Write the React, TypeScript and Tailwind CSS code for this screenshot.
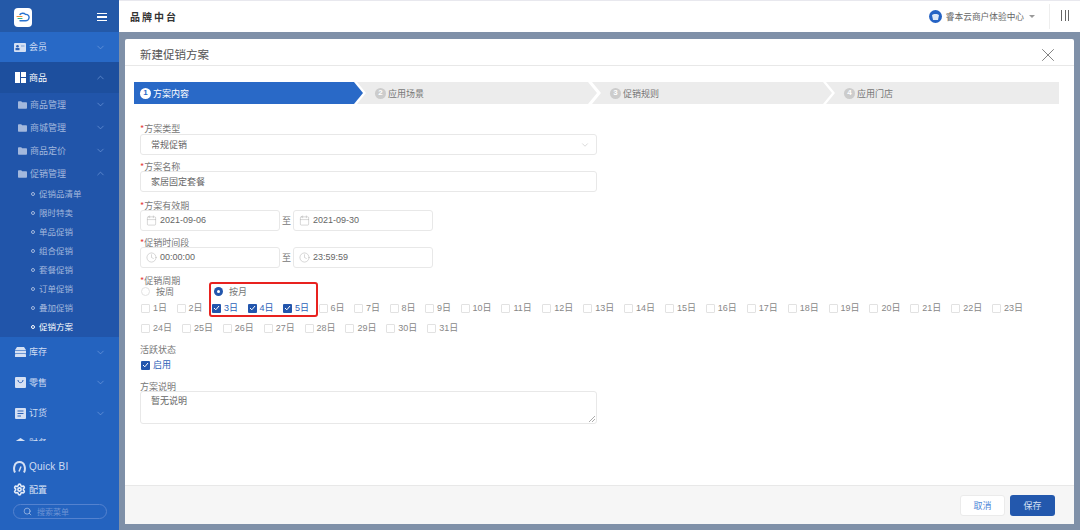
import { ChevronDown, ChevronUp, Settings, Search, X, Calendar, Clock } from 'lucide-react';
import type { ReactNode } from 'react';

const LEAF_ITEMS = ['促销品清单', '限时特卖', '单品促销', '组合促销', '套餐促销', '订单促销', '叠加促销', '促销方案'];
const SUB_ITEMS = ['商品管理', '商城管理', '商品定价'];
const ROW_ONE = Array.from({ length: 23 }, (_, i) => i + 1);
const ROW_TWO = Array.from({ length: 8 }, (_, i) => i + 24);

function Chevron({ up }: { up?: boolean }) {
  const Icon = up ? ChevronUp : ChevronDown;
  return <Icon size={11} strokeWidth={1.3} className="absolute right-[13px] text-[#7da3e0]" />;
}

function Latin({ children }: { children: ReactNode }) {
  return <span className="[font-family:'Liberation_Sans',sans-serif]">{children}</span>;
}

function FolderIcon() {
  return (
    <svg width="9" height="8" viewBox="0 0 9 8" className="shrink-0">
      <path d="M0 1.2C0 .6.4.2 1 .2h2.2l1 1.1H8c.6 0 1 .4 1 1v4.5c0 .6-.4 1-1 1H1c-.6 0-1-.4-1-1z" fill="#a3b8dd" />
    </svg>
  );
}

function MenuRow({ icon, label, up, className }: { icon: ReactNode; label: string; up?: boolean; className: string }) {
  return (
    <div className={`relative flex items-center pl-[14px] gap-[3px] text-[9px] text-[#cfdcf2] ${className}`}>
      <span className="flex w-[12px] justify-center">{icon}</span>
      <span>{label}</span>
      <Chevron up={up} />
    </div>
  );
}

function Sidebar() {
  return (
    <aside className="flex h-full w-[119px] shrink-0 flex-col bg-[#2463bf]">
      <div className="flex h-[32px] items-center justify-between bg-[#2459a8] pl-[14px] pr-[12px] pt-[2px]">
        <div className="flex h-[19px] w-[18px] items-center justify-center rounded-[4px] bg-white">
          <svg width="14" height="11" viewBox="0 0 14 11" fill="none">
            <path d="M4 2.5C5 1 8 .7 9.5 2.4 12 2.2 13.4 4 13 6c-.3 1.8-1.8 2.8-3.500 2.800H4" stroke="#2a73d0" strokeWidth="1.400" strokeLinecap="round" />
            <path d="M1 4.500h5" stroke="#e98c35" strokeWidth="1.100" strokeLinecap="round" />
            <path d="M2 6.500h4" stroke="#35b58f" strokeWidth="1.100" strokeLinecap="round" />
          </svg>
        </div>
        <div className="flex w-[10px] flex-col gap-[2px]">
          <span className="h-[1.500px] bg-white" />
          <span className="h-[1.500px] bg-white" />
          <span className="h-[1.500px] bg-white" />
        </div>
      </div>

      <div className="h-[409px] overflow-hidden">
        <MenuRow
          className="h-[30px] bg-[#2869c6]"
          label="会员"
          icon={
            <svg width="12" height="9" viewBox="0 0 12 9">
              <rect width="12" height="9" rx="1" fill="#d5e0f3" />
              <circle cx="3.500" cy="3.200" r="1.300" fill="#2c62b8" />
              <rect x="1.500" y="5" width="4" height="2.200" fill="#2c62b8" />
              <rect x="7" y="2.500" width="3.500" height="1" fill="#7d9fd8" />
            </svg>
          }
        />
        <MenuRow
          up
          className="h-[31px] bg-[#1d4f9e] text-white"
          label="商品"
          icon={
            <svg width="11" height="11" viewBox="0 0 11 11" fill="#fff">
              <rect width="5" height="11" />
              <rect x="6" width="5" height="5" />
              <rect x="6" y="6" width="5" height="5" />
            </svg>
          }
        />
        <div className="bg-[#2155aa] pb-0">
          {SUB_ITEMS.map((name) => (
            <div key={name} className="relative flex h-[23px] items-center gap-[3px] pl-[18px] text-[9px] text-[#a3b8dd]">
              <FolderIcon />
              <span>{name}</span>
              <Chevron />
            </div>
          ))}
          <div className="relative flex h-[23px] items-center gap-[3px] pl-[18px] text-[9px] text-[#a3b8dd]">
            <FolderIcon />
            <span>促销管理</span>
            <Chevron up />
          </div>
          {LEAF_ITEMS.map((name) => {
            const active = name === '促销方案';
            return (
              <div
                key={name}
                className={`flex h-[19px] items-center gap-[4px] pb-[2px] pl-[31px] text-[8.500px] ${active ? 'text-white' : 'text-[#a3b8dd]'}`}
              >
                <span className={`h-[4px] w-[4px] rounded-full border ${active ? 'border-white' : 'border-[#a3b8dd]'}`} />
                <span>{name}</span>
              </div>
            );
          })}
        </div>
        <MenuRow
          className="h-[30px]"
          label="库存"
          icon={
            <svg width="11" height="10" viewBox="0 0 11 10" fill="#d5e0f3">
              <path d="M2 0h7l2 3H0z" />
              <rect y="3.600" width="11" height="2.800" />
              <rect y="7" width="11" height="3" rx=".6" />
            </svg>
          }
        />
        <MenuRow
          className="h-[31px]"
          label="零售"
          icon={
            <svg width="11" height="11" viewBox="0 0 11 11">
              <rect width="11" height="11" rx="1" fill="#d5e0f3" />
              <path d="M3 3c0 3.500 5 3.500 5 0" fill="none" stroke="#2c62b8" strokeWidth="1" />
            </svg>
          }
        />
        <MenuRow
          className="h-[30px]"
          label="订货"
          icon={
            <svg width="11" height="11" viewBox="0 0 11 11">
              <rect width="11" height="11" rx="1" fill="#d5e0f3" />
              <path d="M2.500 3h6M2.500 5.500h6M2.500 8h3.500" stroke="#2c62b8" strokeWidth="1" />
            </svg>
          }
        />
        <MenuRow
          className="h-[30px]"
          label="财务"
          icon={
            <svg width="11" height="10" viewBox="0 0 11 10" fill="#d5e0f3">
              <path d="M0 3.500 5.500 0 11 3.500V10H0z" />
            </svg>
          }
        />
      </div>

      <div className="flex flex-col pl-[13px] pt-[14px]">
        <div className="flex h-[23px] items-center gap-[3px] text-[10px] tracking-[.2px] text-[#cfdcf2]">
          <svg width="13" height="12" viewBox="0 0 13 12" fill="none">
            <path d="M2 11.500C.2 8 .9 1 6.500 1S12.800 8 11 11.500" stroke="#d5e0f3" strokeWidth="2" />
            <path d="M6 10.500 8 5.500" stroke="#d5e0f3" strokeWidth="1.500" />
          </svg>
          <Latin>Quick BI</Latin>
        </div>
        <div className="flex h-[23px] items-center gap-[3px] text-[9px] text-[#dbe5f6]">
          <Settings size={13} strokeWidth={3} className="text-[#e3ebf8]" />
          <span>配置</span>
        </div>
        <div className="mt-[3px] flex h-[15px] w-[94px] items-center gap-[5px] rounded-full border border-[#5482cf] pl-[9px] text-[8px] text-[#6d93d4]">
          <Search size={9} strokeWidth={1.500} className="text-[#cfdcf2]" />
          <span>搜索菜单</span>
        </div>
      </div>
    </aside>
  );
}

function Step({ num, label, active, className }: { num: number; label: string; active?: boolean; className: string }) {
  return (
    <div className={`flex h-[22px] items-center gap-[2px] text-[9px] ${active ? 'bg-[#2969c7] pl-[6px] text-white' : 'bg-[#ececec] pl-[18px] text-[#777]'} ${className}`}>
      <span
        className={`flex h-[11px] w-[11px] items-center justify-center rounded-full text-[8px] font-bold ${active ? 'bg-white text-[#2969c7]' : 'bg-[#cccccc] text-white'}`}
      >
        <Latin>{num}</Latin>
      </span>
      <span className="pt-[2px]">{label}</span>
    </div>
  );
}

function FieldLabel({ text, required, className }: { text: string; required?: boolean; className: string }) {
  return (
    <div className={`flex h-[10px] items-center pt-[2px] text-[9px] leading-[10px] text-[#777] ${className}`}>
      {required && <span className="text-[#e5403a]">*</span>}
      {text}
    </div>
  );
}

function PickerBox({ icon, value }: { icon: ReactNode; value: string }) {
  return (
    <div className="flex h-[21px] w-[140px] items-center gap-[3px] rounded-[3px] border border-[#e8e8e8] pl-[5px] text-[9px] text-[#666]">
      {icon}
      <Latin>{value}</Latin>
    </div>
  );
}

function DayCheck({ day, checked }: { day: number; checked?: boolean }) {
  return (
    <div className={`flex h-[20px] items-center gap-[3px] text-[9px] ${day < 10 ? 'w-[35.500px]' : 'w-[40.900px]'} ${checked ? 'text-[#2c62b8]' : 'text-[#888]'}`}>
      <CheckBox checked={checked} />
      <span>
        <Latin>{day}</Latin>日
      </span>
    </div>
  );
}

function CheckBox({ checked }: { checked?: boolean }) {
  if (!checked) return <span className="h-[9px] w-[9px] shrink-0 rounded-[1px] border border-[#e2e2e2] bg-white" />;
  return (
    <span className="flex h-[9px] w-[9px] shrink-0 items-center justify-center rounded-[1px] bg-[#2356ad]">
      <svg width="7" height="6" viewBox="0 0 7 6" fill="none">
        <path d="M1 3l1.800 1.800L6 1" stroke="#fff" strokeWidth="1" />
      </svg>
    </span>
  );
}

function PromoForm() {
  return (
    <div className="flex-1 pl-[15px] pt-[19px]">
      <FieldLabel required text="方案类型" className="" />
      <div className="relative mt-px flex h-[21px] w-[457px] items-center rounded-[3px] border border-[#e8e8e8] pl-[10px] text-[9px] text-[#666]">
        常规促销
        <ChevronDown size={10} strokeWidth={1.200} className="absolute right-[6px] text-[#b5b5b5]" />
      </div>

      <FieldLabel required text="方案名称" className="mt-[6px]" />
      <div className="flex h-[21px] w-[457px] items-center rounded-[3px] border border-[#e8e8e8] pl-[10px] text-[9px] text-[#666]">
        家居固定套餐
      </div>

      <FieldLabel required text="方案有效期" className="mt-[8px]" />
      <div className="flex items-center">
        <PickerBox icon={<Calendar size={11} strokeWidth={1} className="text-[#aaa]" />} value="2021-09-06" />
        <span className="w-[13px] text-center text-[9px] text-[#777]">至</span>
        <PickerBox icon={<Calendar size={11} strokeWidth={1} className="text-[#aaa]" />} value="2021-09-30" />
      </div>

      <FieldLabel required text="促销时间段" className="mt-[6px]" />
      <div className="flex items-center">
        <PickerBox icon={<Clock size={11} strokeWidth={1} className="text-[#aaa]" />} value="00:00:00" />
        <span className="w-[13px] text-center text-[9px] text-[#777]">至</span>
        <PickerBox icon={<Clock size={11} strokeWidth={1} className="text-[#aaa]" />} value="23:59:59" />
      </div>

      <FieldLabel required text="促销周期" className="mt-[7px]" />
      <div className="relative">
        <div className="flex h-[13px] items-center pl-px text-[9px] text-[#777]">
          <div className="flex w-[73px] items-center gap-[6px]">
            <span className="h-[9px] w-[9px] rounded-full border border-[#e2e2e2]" />
            按周
          </div>
          <div className="flex items-center gap-[6px]">
            <span className="flex h-[9px] w-[9px] items-center justify-center rounded-full bg-[#2356ad]">
              <span className="h-[3px] w-[3px] rounded-full bg-white" />
            </span>
            按月
          </div>
        </div>
        <div className="flex w-[900px] flex-wrap pl-px">
          {ROW_ONE.map((day) => (
            <DayCheck key={day} day={day} checked={day >= 3 && day <= 5} />
          ))}
          {ROW_TWO.map((day) => (
            <DayCheck key={day} day={day} />
          ))}
        </div>
        {/* 红框标注 */}
        <div className="absolute left-[69px] top-[-3px] h-[35px] w-[109px] rounded-[3px] border-2 border-[#e8221f]" />
      </div>

      <FieldLabel text="活跃状态" className="mt-[6px]" />
      <div className="mt-[3px] flex h-[16px] items-center gap-[3px] pl-px text-[9px] text-[#2c62b8]">
        <CheckBox checked />
        启用
      </div>

      <FieldLabel text="方案说明" className="mt-[8px]" />
      <div className="relative h-[33px] w-[457px] rounded-[3px] border border-[#e8e8e8] pl-[10px] pt-[2px] text-[9px] text-[#666]">
        暂无说明
        <svg width="6" height="6" viewBox="0 0 6 6" className="absolute bottom-px right-px">
          <path d="M0 6 6 0M3 6l3-3" stroke="#888" strokeWidth=".7" />
        </svg>
      </div>
    </div>
  );
}

export default function App() {
  return (
    <div className="flex h-[530px] w-[1080px] overflow-hidden bg-[#7f90a8] [font-family:'Noto_Sans_CJK_SC',sans-serif]">
      <Sidebar />

      <div className="flex min-w-0 flex-1 flex-col">
        {/* Header */}
        <header className="flex h-[32px] shrink-0 items-center border-t border-[#e8e8ee] bg-white pl-[11px]">
          <span className="text-[10px] font-bold tracking-[2px] text-[#333]">品牌中台</span>
          <div className="ml-auto flex items-center">
            <span className="flex h-[13px] w-[13px] items-center justify-center rounded-full bg-[#2563c4]">
              <svg width="7" height="6" viewBox="0 0 7 6" fill="#dce7f7">
                <path d="M0 1 2 0h3l2 1-1 5H1z" />
              </svg>
            </span>
            <span className="ml-[4px] text-[8.700px] text-[#666]">睿本云商户体验中心</span>
            <span className="ml-[5px] h-0 w-0 border-x-[3px] border-t-[3px] border-x-transparent border-t-[#999]" />
            <span className="ml-[14px] h-[25px] w-px bg-[#eeeeee]" />
            <div className="ml-[11px] mr-[11px] flex gap-[2.500px] pb-[2px]">
              <span className="h-[11px] w-px bg-[#666]" />
              <span className="h-[11px] w-px bg-[#666]" />
              <span className="h-[11px] w-px bg-[#666]" />
            </div>
          </div>
        </header>

        {/* Modal */}
        <div className="flex min-h-0 flex-1 px-[6px] pb-[6px] pt-[7px]">
          <div className="flex flex-1 flex-col overflow-hidden rounded-t-[2px] bg-white">
            <div className="relative flex h-[27px] shrink-0 items-center border-b border-[#e8e8e8] pl-[15px] pt-[5px] text-[11.500px] text-[#555]">
              新建促销方案
              <X size={22} strokeWidth={1} className="absolute right-[15px] text-[#777]" />
            </div>

            <div className="mt-[16px] flex pl-[9px]">
              <Step active num={1} label="方案内容" className="w-[229px] [clip-path:polygon(0_0,220px_0,229px_50%,220px_100%,0_100%)]" />
              <Step num={2} label="应用场景" className="ml-[-6px] w-[240px] [clip-path:polygon(0_0,231px_0,240px_50%,231px_100%,0_100%,9px_50%)]" />
              <Step num={3} label="促销规则" className="ml-[-5px] w-[240px] [clip-path:polygon(0_0,231px_0,240px_50%,231px_100%,0_100%,9px_50%)]" />
              <Step num={4} label="应用门店" className="ml-[-6px] w-[233px] [clip-path:polygon(0_0,100%_0,100%_100%,0_100%,9px_50%)]" />
            </div>

            <PromoForm />

            <div className="flex h-[39px] shrink-0 items-center justify-end gap-[5px] border-t border-[#e8e8e8] bg-[#f6f6f6] pr-[19px]">
              <button className="h-[21px] w-[45px] rounded-[3px] border border-[#ebebeb] bg-white pt-px text-[9px] text-[#4d86d8]">取消</button>
              <button className="h-[21px] w-[45px] rounded-[3px] bg-[#2358ad] pt-px text-[9px] text-[#d6e2f4]">保存</button>
            </div>
          </div>
        </div>
      </div>
    </div>
  );
}
